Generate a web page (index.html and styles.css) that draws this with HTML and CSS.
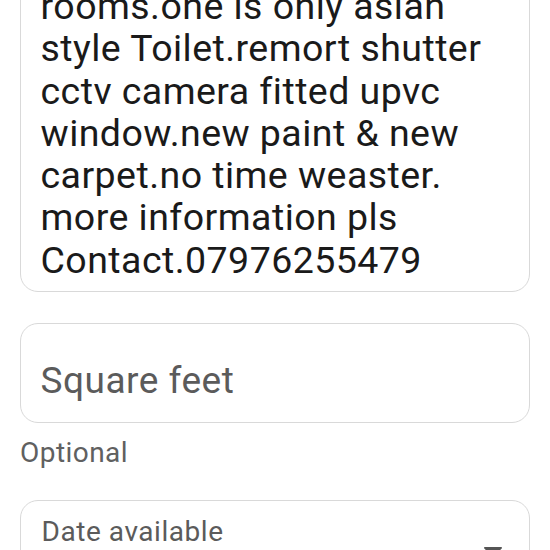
FILE: index.html
```html
<!DOCTYPE html>
<html lang="en">
<head>
    <meta charset="UTF-8">
    <meta name="viewport" content="width=device-width, initial-scale=1.0">
    <title>Listing details</title>
    <link rel="stylesheet" href="styles.css">
</head>
<body>
    <div id="listing-form">
        <div class="field description">
            <p class="description-text">
                rooms.one is only asian<br>
                style Toilet.remort shutter<br>
                cctv camera fitted upvc<br>
                window.new paint &amp; new<br>
                carpet.no time weaster.<br>
                more information pls<br>
                Contact.07976255479
            </p>
        </div>

        <div class="field square-feet">
            <span class="placeholder">Square feet</span>
        </div>
        <div class="helper">Optional</div>

        <div class="field date-field">
            <span class="field-label">Date available</span>
            <div class="date-row">
                <svg class="dropdown-icon" width="18" height="10" viewBox="0 0 18 10">
                    <path d="M1 0h16c.9 0 1.3 1 .7 1.6l-7.9 7.9c-.4.4-1 .4-1.4 0L.3 1.6C-.3 1 .1 0 1 0z" fill="#555"/>
                </svg>
            </div>
        </div>
    </div>
</body>
</html>
```

FILE: styles.css
```css
body {
    margin: 0;
    padding: 0;
    background-color: #fff;
    font-family: Roboto, "Noto Sans", sans-serif;
    overflow: hidden;
}

#listing-form {
    padding: 0 20px;
}

.field {
    border: 1.5px solid #d9d9d9;
    border-radius: 18px;
    background-color: #fff;
}

.description {
    margin-top: -16px;
    border-top-left-radius: 0;
    border-top-right-radius: 0;
    padding: 0 20px 10px 19.5px;
}

.description-text {
    margin: 0;
    font-size: 37.5px;
    line-height: 42.3px;
    letter-spacing: 0.45px;
    color: #1a1a1a;
    white-space: nowrap;
}

.square-feet {
    margin-top: 31px;
    padding: 35px 20px 20px 19.5px;
}

.placeholder {
    display: block;
    font-size: 37px;
    line-height: 43px;
    letter-spacing: 0.5px;
    color: #5b5b5b;
}

.helper {
    margin-top: 14px;
    font-size: 28px;
    line-height: 32px;
    letter-spacing: 0.45px;
    color: #606060;
}

.date-field {
    margin-top: 31px;
    padding: 15px 27px 40px 20.5px;
}

.field-label {
    display: block;
    font-size: 28px;
    line-height: 32px;
    letter-spacing: 0.55px;
    color: #5b5b5b;
}

.date-row {
    display: flex;
    justify-content: flex-end;
    margin-top: -1px;
}

.dropdown-icon {
    display: block;
}
```
